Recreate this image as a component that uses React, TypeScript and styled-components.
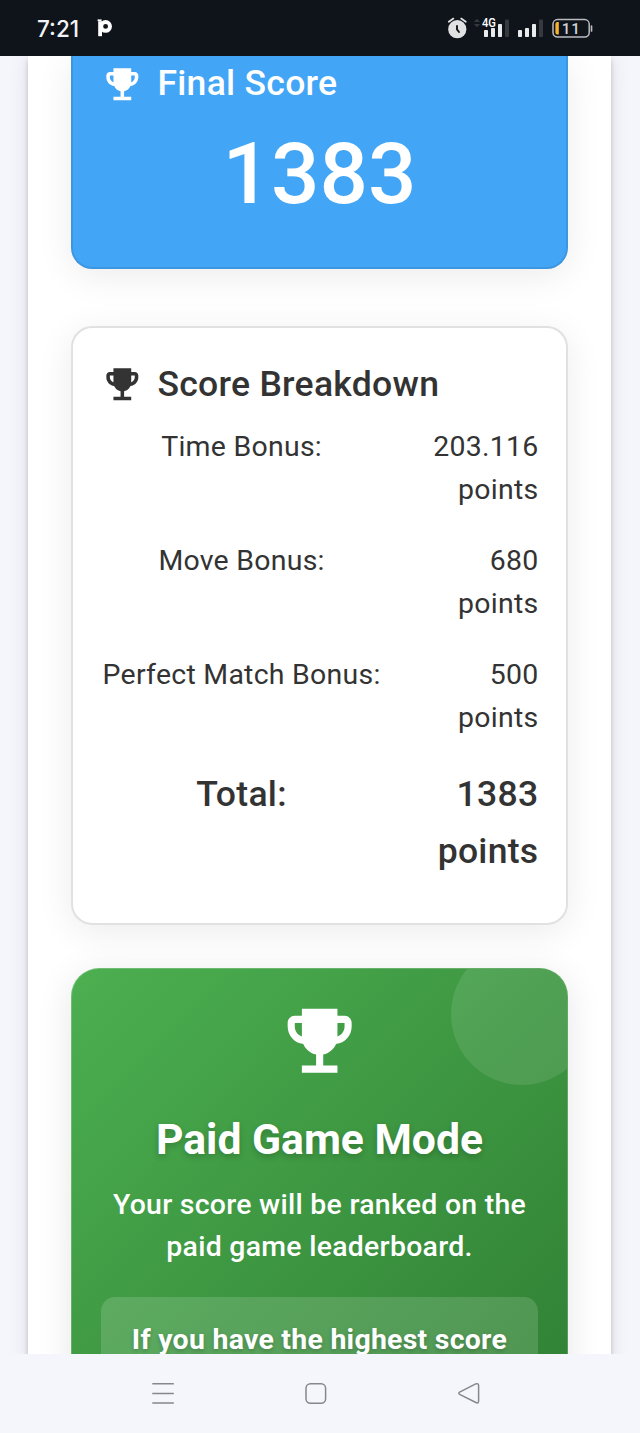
import React from 'react';
import styled, { createGlobalStyle, css } from 'styled-components';

const GlobalStyle = createGlobalStyle`
  *, *::before, *::after { box-sizing: border-box; }
  body { margin: 0; background: #f4f6fb; font-family: Roboto, sans-serif; }
`;

const Screen = styled.div`
  display: flex;
  flex-direction: column;
  width: 640px;
  height: 1433px;
  overflow: hidden;
`;

const StatusBar = styled.header`
  display: flex;
  align-items: center;
  justify-content: space-between;
  flex: none;
  height: 56px;
  padding: 0 47px 0 37px;
  background: #0f141b;
  color: #f2f3f5;
`;

const StatusGroup = styled.div`
  display: flex;
  align-items: center;
`;

const Clock = styled.span`
  font-family: Inter, sans-serif;
  font-size: 22.5px;
  line-height: 28px;
  font-weight: 450;
  width: 60px;
  padding-top: 1px;
`;

const Viewport = styled.main`
  flex: 1;
  min-height: 0;
  overflow: hidden;
  padding: 0 29px 0 28px;
  background: #f4f6fb;
`;

const Sheet = styled.div`
  height: 1500px;
  padding: 0 43px;
  background: #fff;
  box-shadow: 0 3px 6px -1px rgba(0, 0, 0, 0.26), 0 2px 20px rgba(0, 0, 0, 0.09);
`;

const Card = styled.section`
  padding: 28.4px 27.6px;
  border: 2px solid #e1e1e1;
  border-radius: 21.3px;
  background: #fff;
  color: #333;
  box-shadow: 0 7px 36px rgba(0, 0, 0, 0.08);
`;

const ScoreCard = styled(Card)`
  height: 213px;
  padding-top: 0;
  border-top: 0;
  border-color: #3d97e0;
  border-radius: 0 0 21.3px 21.3px;
  background: #42a5f5;
  color: #fff;
`;

const BreakdownCard = styled(Card)`
  height: 599px;
  margin-top: 57px;
`;

const CardHeader = styled.h2`
  display: flex;
  align-items: center;
  gap: 14.2px;
  height: 56px;
  margin: 0 0 14px;
  font-size: 35.56px;
  line-height: 56px;
  font-weight: 500;
  letter-spacing: 0.0075em;
`;

const ScoreHeader = styled(CardHeader)`
  margin-bottom: 13.2px;
`;

const ScoreTitle = styled.span`
  padding-bottom: 2px;
`;

const FinalScore = styled.div`
  font-size: 85.33px;
  line-height: 99.6px;
  font-weight: 500;
  text-align: center;
`;

const Row = styled.div<{ $total?: boolean }>`
  display: grid;
  grid-template-columns: 282px 110px;
  justify-content: space-between;
  margin-bottom: 28.4px;
  font-size: 28.44px;
  line-height: 42.67px;
  letter-spacing: 0.00938em;
  ${(p) =>
    p.$total &&
    css`
      margin-top: -1.4px;
      font-size: 35.56px;
      line-height: 56.9px;
      font-weight: 500;
      letter-spacing: 0.0075em;
    `}
`;

const Label = styled.span`
  text-align: center;
  white-space: nowrap;
`;

const Value = styled.span`
  text-align: right;
`;

const PaidCard = styled.section`
  position: relative;
  height: 500px;
  margin-top: 42.5px;
  padding: 29.4px;
  overflow: hidden;
  border: 1px solid rgba(255, 255, 255, 0.2);
  border-radius: 28.4px;
  background: linear-gradient(135deg, #4caf50 0%, #2e7d32 100%) border-box;
  color: #fff;
  text-align: center;
  box-shadow: 0 7px 36px rgba(0, 0, 0, 0.1);
`;

const Bubble = styled.div`
  position: absolute;
  top: -25.7px;
  right: -25.7px;
  width: 142.2px;
  height: 142.2px;
  border-radius: 50%;
  background: rgba(255, 255, 255, 0.1);
`;

const PaidTitle = styled.h2`
  margin: 27.6px 0 15.9px;
  font-size: 42.67px;
  line-height: 57px;
  font-weight: 700;
  text-shadow: 0 3px 6px rgba(0, 0, 0, 0.2);
`;

const PaidText = styled.p`
  margin: 0 0 27.5px;
  font-size: 28.44px;
  line-height: 42.67px;
  font-weight: 500;
  letter-spacing: 0.00938em;
`;

const Notice = styled.div`
  height: 180px;
  padding: 22.3px 20px;
  border-radius: 14.2px;
  background: rgba(255, 255, 255, 0.15);
  font-size: 28.44px;
  line-height: 42.67px;
  font-weight: 700;
  letter-spacing: 0.00938em;
  text-shadow: 0 2px 4px rgba(0, 0, 0, 0.2);
  white-space: nowrap;
`;

const NavBar = styled.nav`
  display: flex;
  justify-content: space-between;
  flex: none;
  height: 79px;
  padding: 28px 159px 0 151px;
  background: #f4f6fb;
`;

const TrophyIcon = styled.svg.attrs({ viewBox: '0 0 24 24' })<{ $size: number }>`
  display: block;
  flex: none;
  width: ${(p) => p.$size}px;
  height: ${(p) => p.$size}px;
  margin: 0 ${(p) => (p.$size > 60 ? 'auto' : '0')};
  fill: currentColor;
`;

function Trophy({ size }: { size: number }) {
  return (
    <TrophyIcon $size={size}>
      <path d="M19 5h-2V3H7v2H5c-1.1 0-2 .9-2 2v1c0 2.55 1.92 4.63 4.39 4.94.63 1.5 1.98 2.63 3.61 2.96V19H7v2h10v-2h-4v-3.1c1.63-.33 2.98-1.46 3.61-2.96C19.08 12.63 21 10.55 21 8V7c0-1.1-.9-2-2-2zM5 8V7h2v3.82C5.84 10.4 5 9.3 5 8zm14 0c0 1.3-.84 2.4-2 2.82V7h2v1z" />
    </TrophyIcon>
  );
}

const rows = [
  { label: 'Time Bonus:', value: '203.116 points' },
  { label: 'Move Bonus:', value: '680 points' },
  { label: 'Perfect Match Bonus:', value: '500 points' },
  { label: 'Total:', value: '1383 points', total: true },
];

function StatusIcons() {
  return (
    <svg width="148" height="26" viewBox="445 15 148 26">
      <g fill="#dfe1e2">
        <circle cx="457.3" cy="29.2" r="9.1" />
        <path d="M448.8 21.8l4.6-3.2M465.8 21.8l-4.6-3.2" stroke="#dfe1e2" strokeWidth="1.8" strokeLinecap="round" />
        <path d="M457 26v3.4l2 2.6" fill="none" stroke="#0f141b" strokeWidth="1.9" strokeLinecap="round" strokeLinejoin="round" />
      </g>
      <path d="M474 22l3-3.2 3 3.2zM474 24l3 3.2 3-3.2z" fill="#35393f" />
      <g fill="#e9eaeb">
        <rect x="484" y="30" width="4" height="7" rx="0.8" />
        <rect x="491" y="28" width="4" height="9" rx="0.8" />
        <rect x="498" y="24" width="4" height="13" rx="0.8" />
        <rect x="518" y="30" width="4" height="7" rx="0.8" />
        <rect x="525" y="28" width="4" height="9" rx="0.8" />
        <rect x="532" y="24" width="4" height="13" rx="0.8" />
      </g>
      <g fill="#36393e">
        <rect x="505" y="19.5" width="4" height="17.5" rx="0.8" />
        <rect x="539" y="19.5" width="4" height="17.5" rx="0.8" />
      </g>
      <text x="482" y="27.2" fontFamily="Roboto" fontWeight="500" fontSize="12.6" fill="#fff" textLength="14" lengthAdjust="spacingAndGlyphs">4G</text>
      <rect x="553" y="19.6" width="36.2" height="17.4" rx="4.5" fill="none" stroke="#b9bbbe" strokeWidth="1.5" />
      <path d="M591.5 26v5" stroke="#b9bbbe" strokeWidth="1.7" strokeLinecap="round" />
      <path d="M558.8 22v12.4h-1.4a2 2 0 0 1-2-2V24a2 2 0 0 1 2-2z" fill="#f8b42c" />
      <text x="571.3" y="33.7" textAnchor="middle" fontFamily="Roboto" fontWeight="500" fontSize="15.2" letterSpacing="1" fill="#d0d2d4">11</text>
    </svg>
  );
}

export default function App() {
  return (
    <Screen>
      <GlobalStyle />
      <StatusBar>
        <StatusGroup>
          <Clock>7:21</Clock>
          <svg width="16" height="20" viewBox="0 0 16 20">
            <path d="M3.1 3.2v15" stroke="#fff" strokeWidth="3.8" fill="none" />
            <path d="M.6 2.3h4" stroke="#fff" strokeWidth="1.8" />
            <circle cx="8.6" cy="8.4" r="4.4" fill="none" stroke="#fff" strokeWidth="3.9" />
          </svg>
        </StatusGroup>
        <StatusIcons />
      </StatusBar>
      <Viewport>
        <Sheet>
          <ScoreCard>
            <ScoreHeader>
              <Trophy size={42.67} />
              <ScoreTitle>Final Score</ScoreTitle>
            </ScoreHeader>
            <FinalScore>1383</FinalScore>
          </ScoreCard>
          <BreakdownCard>
            <CardHeader>
              <Trophy size={42.67} />
              Score Breakdown
            </CardHeader>
            {rows.map((r) => (
              <Row key={r.label} $total={r.total}>
                <Label>{r.label}</Label>
                <Value>{r.value}</Value>
              </Row>
            ))}
          </BreakdownCard>
          <PaidCard>
            <Bubble />
            <Trophy size={85.33} />
            <PaidTitle>Paid Game Mode</PaidTitle>
            <PaidText>Your score will be ranked on the paid game leaderboard.</PaidText>
            <Notice>If you have the highest score</Notice>
          </PaidCard>
        </Sheet>
      </Viewport>
      <NavBar>
        <svg width="24" height="24" viewBox="0 0 24 24" fill="none" stroke="#85878b" strokeWidth="1.5">
          <path d="M1.3 1.7h21.5M1.3 11.4h21.5M1.3 21.1h21.5" />
        </svg>
        <svg width="24" height="24" viewBox="0 0 24 24" fill="none" stroke="#85878b" strokeWidth="1.5">
          <rect x="2" y="1.7" width="19.6" height="19.6" rx="4.5" />
        </svg>
        <svg width="24" height="24" viewBox="0 0 24 24" fill="none" stroke="#85878b" strokeWidth="1.5" strokeLinejoin="round">
          <path d="M2.6 10.2L18.7 1.9Q21.6 1 21.6 3.6V19.1Q21.6 21.8 18.9 20.5L2.6 12.3Q1.1 11.2 2.6 10.2z" />
        </svg>
      </NavBar>
    </Screen>
  );
}
